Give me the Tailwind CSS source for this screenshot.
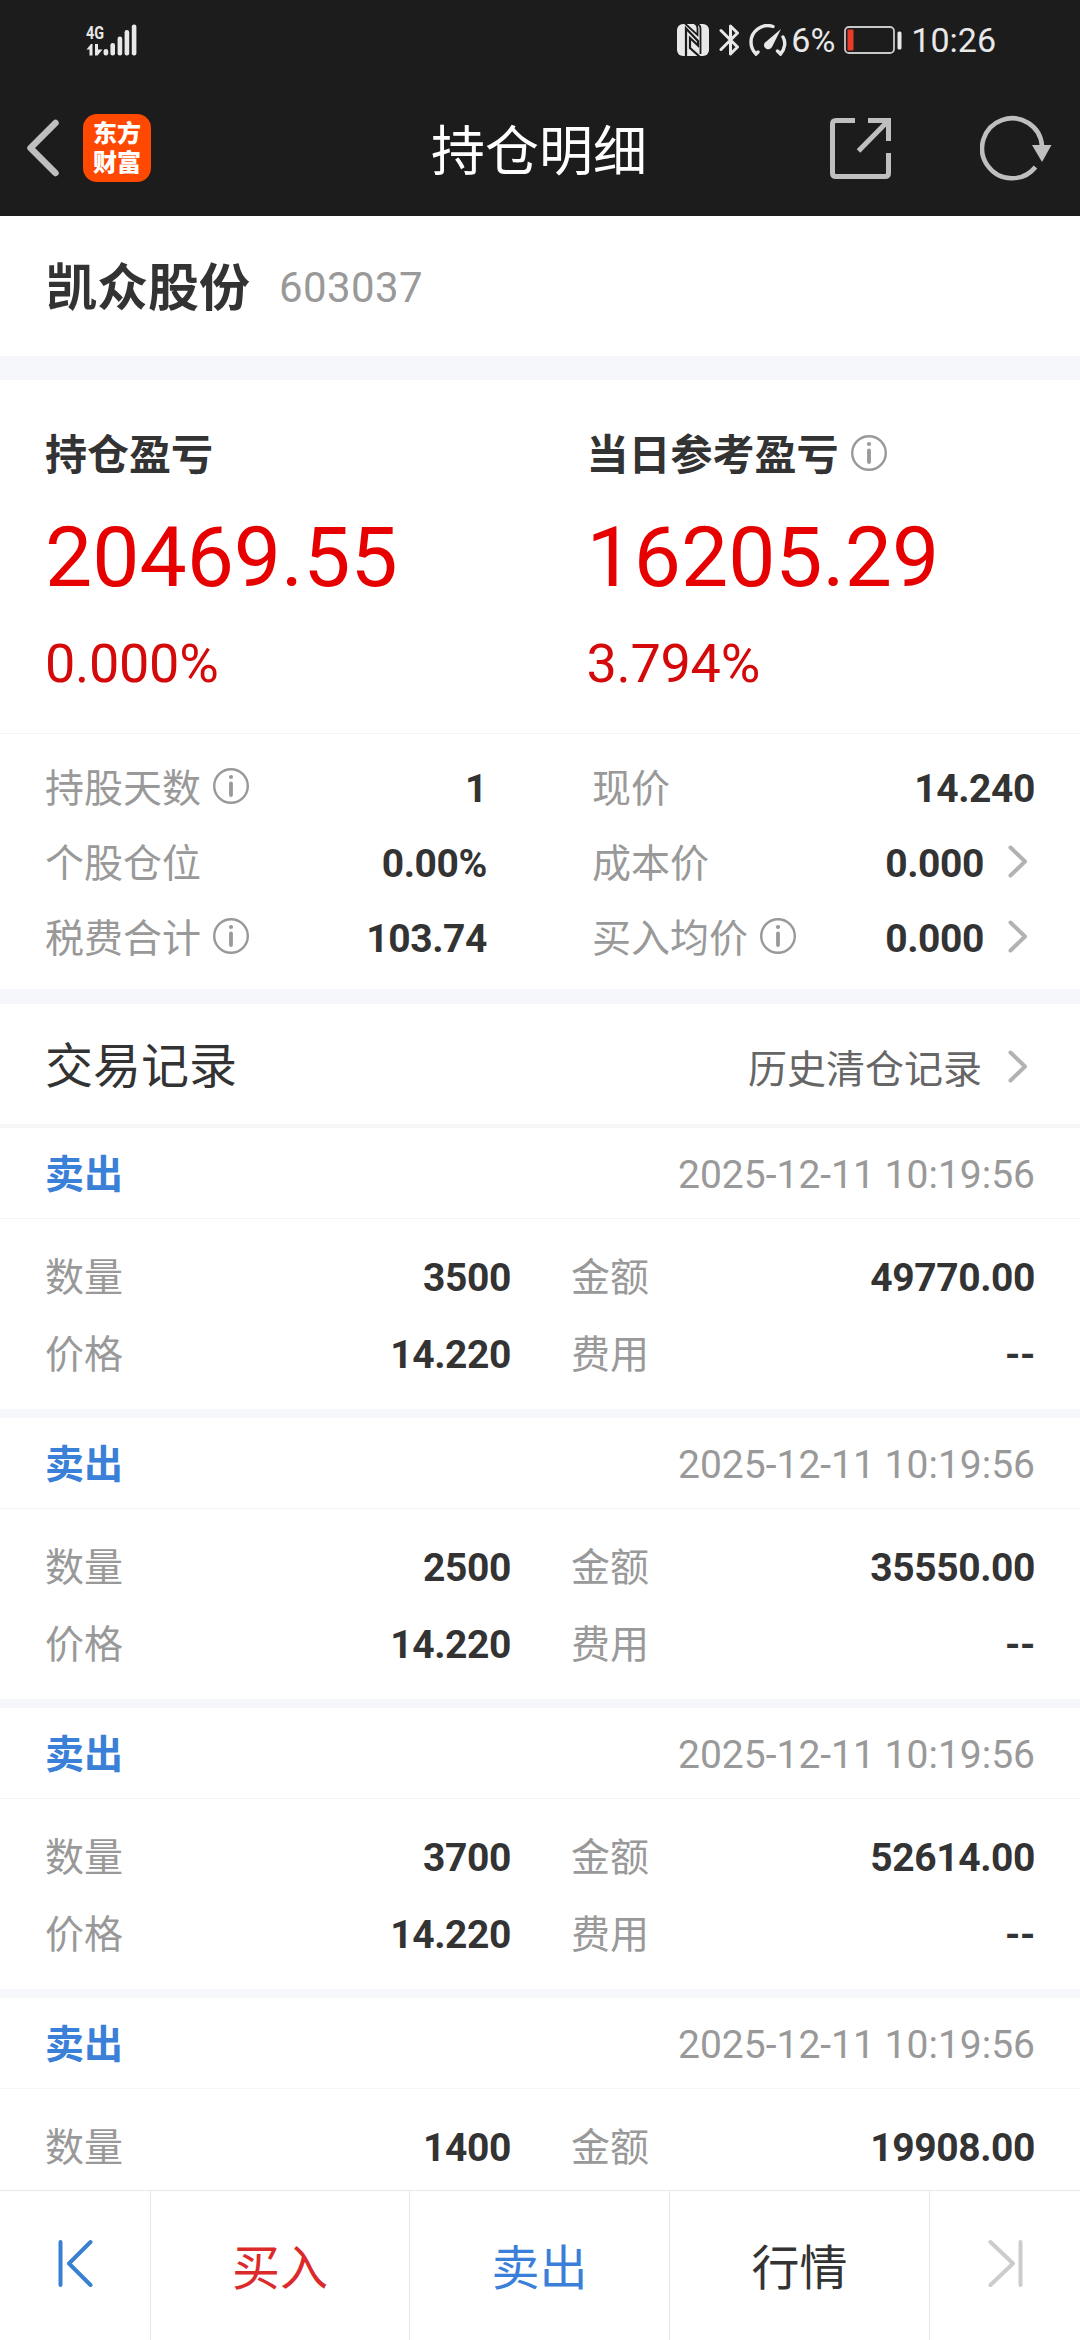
<!DOCTYPE html>
<html lang="zh-CN">
<head>
    <meta charset="UTF-8">
    <meta name="viewport" content="width=device-width, initial-scale=1.0">
    <title>持仓明细</title>

    <script src="https://cdn.jsdelivr.net/npm/@tailwindcss/browser@4"></script>
</head>

<body class="bg-white">

    <!-- shared icons -->
    <svg class="hidden">
        <symbol id="info" viewBox="0 0 36 36">
            <circle cx="18" cy="18" r="16.8" fill="none" stroke="#999" stroke-width="2.4"/>
            <circle cx="18" cy="9" r="2.1" fill="#999"/>
            <path d="M18 15.5V27" stroke="#999" stroke-width="3.8" stroke-linecap="round"/>
        </symbol>
        <symbol id="chevron" viewBox="0 0 20 33">
            <path d="M2.5 2.5L17 16.5L2.5 30.5" fill="none" stroke="#b2b2b2" stroke-width="4" stroke-linecap="round" stroke-linejoin="round"/>
        </symbol>
    </svg>

    <div class="w-[1080px] h-[2340px] flex flex-col overflow-hidden bg-white text-[#333] text-[39px] font-[Roboto,'Noto_Sans_CJK_SC',sans-serif]">

        <!-- top bar -->
        <header class="h-[216px] shrink-0 bg-[#1c1c1c]">
            <div class="h-20 flex items-center justify-between pl-[86px] pr-[84px]">
                <svg class="w-[52px] h-[46px]" viewBox="0 -6 52 46" fill="#e8e8e8">
                    <text x="0" y="15.5" font-size="19" font-weight="700" textLength="18" lengthAdjust="spacingAndGlyphs">4G</text>
                    <path d="M0.500 26.500L5 21H6.500V32.500H3.500V26.500Z"/>
                    <path d="M9 21H12V26.500H16.500L11.500 32.500H9Z"/>
                    <rect x="17.6" y="26" width="4.6" height="6.5" rx="2.2"/>
                    <rect x="24.4" y="20" width="4.6" height="12.5" rx="2.2"/>
                    <rect x="31.6" y="13.5" width="4.6" height="19" rx="2.2"/>
                    <rect x="38.6" y="7" width="4.6" height="25.5" rx="2.2"/>
                    <rect x="45.8" y="1.5" width="4.6" height="31" rx="2.2"/>
                </svg>
                <div class="flex items-center text-[34px] leading-10 text-[#e8e8e8]">
                    <!-- nfc -->
                    <svg class="w-8 h-8 mr-[10px]" viewBox="0 0 32 32">
                        <rect width="32" height="32" rx="6" fill="#e8e8e8"/>
                        <path d="M9 32V4.500L21 17V21.500L13 14V24L22.500 32.500" fill="none" stroke="#1c1c1c" stroke-width="2.200"/>
                        <path d="M8 -0.500L20.500 11V4Q20.500 1 17.500 -0.500M20 0Q23.500 1 23.500 4V30" fill="none" stroke="#1c1c1c" stroke-width="1.800"/>
                    </svg>
                    <!-- bluetooth -->
                    <svg class="w-[21px] h-8 mr-[9px]" viewBox="0 0 21 32" fill="none" stroke="#e8e8e8" stroke-width="3" stroke-linecap="round" stroke-linejoin="round">
                        <path d="M2 6.500L18.500 23L11.500 30V2L18.500 9L2 25.500"/>
                    </svg>
                    <!-- performance gauge -->
                    <svg class="w-[38px] h-8 mr-[4px]" viewBox="0 0 38 32" fill="none" stroke="#e8e8e8" stroke-width="3.400" stroke-linecap="round">
                        <path d="M24 2.500C13 -1 2 7 2 18C2 23 4 27 7 30L9 28"/>
                        <path d="M34 13C37 18 36 25 31.500 30L28.500 27"/>
                        <path d="M32 5L23 23A4 4 0 0 1 15.500 19Z" fill="#e8e8e8" stroke="none"/>
                    </svg>
                    <span>6%</span>
                    <svg class="w-[58px] h-7 ml-[9px] mr-[9px]" viewBox="0 0 58 28">
                        <rect x="1" y="1" width="49" height="26" rx="4" fill="none" stroke="#c8c8c8" stroke-width="1.8"/>
                        <rect x="3.500" y="3.500" width="6" height="21" rx="1" fill="#e83b28"/>
                        <rect x="53.500" y="5.500" width="4" height="18" rx="1.500" fill="#e8e8e8"/>
                    </svg>
                    <span>10:26</span>
                </div>
            </div>
            <div class="h-[136px] grid grid-cols-[1fr_auto_1fr] items-center pl-[26px] pr-[28px]">
                <div class="flex items-center gap-[24px]">
                    <svg class="w-[33px] h-[58px]" viewBox="0 0 33 58">
                        <path d="M29.500 4L4.500 29L29.500 54" fill="none" stroke="#bfbfbf" stroke-width="6.500" stroke-linecap="round" stroke-linejoin="round"/>
                    </svg>
                    <div class="w-[68px] h-[68px] rounded-[14px] bg-[#ff4800] text-white text-[24px] leading-[29px] font-black text-center pt-[6px]">东方<br>财富</div>
                </div>
                <h1 class="text-[54px] leading-[80px] text-white pt-[10px]">持仓明细</h1>
                <div class="flex items-center justify-end gap-[89px]">
                    <svg class="w-[61px] h-[61px]" viewBox="0 0 61 61" fill="none" stroke="#bfbfbf" stroke-width="5">
                        <path d="M25 2.500H6Q2.500 2.500 2.500 6V55Q2.500 58.500 6 58.500H55Q58.500 58.500 58.500 55V35"/>
                        <path d="M38 2.500H58.500V23M58 3L28.500 33"/>
                    </svg>
                    <svg class="w-[72px] h-[66px]" viewBox="0 0 72 66">
                        <path d="M55.500 52A30 30 0 1 1 62 31" fill="none" stroke="#bfbfbf" stroke-width="4.600"/>
                        <path d="M52 30H71.500L62 47Z" fill="#bfbfbf"/>
                    </svg>
                </div>
            </div>
        </header>

        <!-- stock name -->
        <section class="h-[140px] shrink-0 flex items-center pl-[46px] gap-[29px] leading-[60px]">
            <h2 class="text-[51px] font-bold pt-[6px]">凯众股份</h2>
            <span class="text-[42px] tracking-[0.4px] text-[#999] pt-[3px]">603037</span>
        </section>
        <div class="h-6 shrink-0 bg-[#f6f7fa]"></div>

        <!-- profit and loss -->
        <section class="h-[354px] shrink-0 border-b border-[#f5f5f5] grid grid-cols-2 pl-[45px] pt-[46px] gap-x-[46px]">
            <div class="w-[494px]">
                <h3 class="text-[42px] leading-[60px] font-bold">持仓盈亏</h3>
                <div class="mt-[22px] text-[84px] leading-[100px] text-[#e60000]">20469.55</div>
                <div class="mt-[26px] text-[54px] leading-[60px] tracking-[-0.3px] text-[#d40a0a]">0.000%</div>
            </div>
            <div class="pl-px">
                <h3 class="text-[42px] leading-[60px] font-bold flex items-center gap-[12px]">当日参考盈亏<svg class="w-9 h-9 mb-[6px]"><use href="#info"/></svg></h3>
                <div class="mt-[22px] text-[84px] leading-[100px] text-[#e60000]">16205.29</div>
                <div class="mt-[26px] text-[54px] leading-[60px] tracking-[-0.3px] text-[#d40a0a]">3.794%</div>
            </div>
        </section>

        <!-- position figures -->
        <section class="h-[255px] shrink-0 flex pt-[18px] pl-[45px] pr-[45px] leading-[75px]">
            <div class="w-[442px] mr-[105px]">
                <div class="flex justify-between">
                    <span class="flex items-center gap-[12px] text-[#999]">持股天数<svg class="w-9 h-9 mb-[7px]"><use href="#info"/></svg></span>
                    <b class="tracking-[-0.4px]">1</b>
                </div>
                <div class="flex justify-between">
                    <span class="text-[#999]">个股仓位</span>
                    <b class="tracking-[-0.4px]">0.00%</b>
                </div>
                <div class="flex justify-between">
                    <span class="flex items-center gap-[12px] text-[#999]">税费合计<svg class="w-9 h-9 mb-[7px]"><use href="#info"/></svg></span>
                    <b class="tracking-[-0.4px]">103.74</b>
                </div>
            </div>
            <div class="flex-1">
                <div class="flex justify-between">
                    <span class="text-[#999]">现价</span>
                    <b class="tracking-[-0.4px]">14.240</b>
                </div>
                <div class="flex justify-between">
                    <span class="text-[#999]">成本价</span>
                    <span class="flex items-center"><b class="tracking-[-0.4px]">0.000</b><svg class="w-5 h-[33px] ml-[24px] mr-[7px] mb-[6px]"><use href="#chevron"/></svg></span>
                </div>
                <div class="flex justify-between">
                    <span class="flex items-center gap-[12px] text-[#999]">买入均价<svg class="w-9 h-9 mb-[7px]"><use href="#info"/></svg></span>
                    <span class="flex items-center"><b class="tracking-[-0.4px]">0.000</b><svg class="w-5 h-[33px] ml-[24px] mr-[7px] mb-[6px]"><use href="#chevron"/></svg></span>
                </div>
            </div>
        </section>
        <div class="h-[15px] shrink-0 bg-[#f6f7fa]"></div>

        <!-- trade records -->
        <section class="h-[124px] shrink-0 border-b-4 border-[#f6f6f6] flex items-center justify-between pl-[45px] pr-[52px]">
            <h2 class="text-[48px] leading-[60px] pt-[5px]">交易记录</h2>
            <a class="flex items-center text-[#666] leading-[60px]"><span class="pt-[12px]">历史清仓记录</span><svg class="w-5 h-[33px] ml-[26px] mt-[4px]"><use href="#chevron"/></svg></a>
        </section>
        <main id="recordList" class="flex-1 min-h-0 overflow-hidden"></main>

        <!-- bottom bar -->
        <nav class="h-[150px] shrink-0 border-t border-[#e8e8e8] bg-white grid grid-cols-[151px_259px_260px_260px_150px] text-[48px] leading-[60px] text-center">
            <div class="border-r border-[#e8e8e8] pt-[47px] pl-[57px] text-left">
                <svg class="w-9 h-[52px]" viewBox="0 0 36 52" fill="none" stroke="#3a80d2" stroke-width="4" stroke-linecap="round" stroke-linejoin="round">
                    <path d="M3.500 4V47M33.500 4L12 25.500L33.500 47"/>
                </svg>
            </div>
            <div class="border-r border-[#e8e8e8] pt-[48px] text-[#dc2a2a]">买入</div>
            <div class="border-r border-[#e8e8e8] pt-[48px] text-[#3a80d8]">卖出</div>
            <div class="border-r border-[#e8e8e8] pt-[48px]">行情</div>
            <div class="pt-[47px] pl-[58px] text-left">
                <svg class="w-9 h-[52px]" viewBox="0 0 36 52" fill="none" stroke="#ccc" stroke-width="4" stroke-linecap="round" stroke-linejoin="round">
                    <path d="M32.500 4V47M2.500 4L25 25.500L2.500 47"/>
                </svg>
            </div>
        </nav>
    </div>

    <script>
        const records = [
            { time: "2025-12-11 10:19:56", count: "3500", amount: "49770.00", price: "14.220", fee: "--" },
            { time: "2025-12-11 10:19:56", count: "2500", amount: "35550.00", price: "14.220", fee: "--" },
            { time: "2025-12-11 10:19:56", count: "3700", amount: "52614.00", price: "14.220", fee: "--" },
            { time: "2025-12-11 10:19:56", count: "1400", amount: "19908.00" },
        ];

        const list = document.getElementById("recordList");

        function cell(label, value) {
            return `<div class="flex justify-between"><span class="text-[#999]">${label}</span><b class="tracking-[-0.4px]">${value}</b></div>`;
        }

        records.forEach((record) => {
            const item = document.createElement("div");
            item.className = "h-[290px] border-b-9 border-[#f6f7fa]";

            let cells = cell("数量", record.count) + cell("金额", record.amount);
            if (record.price) {
                cells += cell("价格", record.price) + cell("费用", record.fee);
            }

            item.innerHTML = `
                <div class="h-[91px] border-b border-[#f5f5f5] flex items-center justify-between pl-[45px] pr-[45px] pt-[5px]">
                    <b class="text-[#3a80d8]">卖出</b>
                    <span class="text-[#999]">${record.time}</span>
                </div>
                <div class="grid grid-cols-[466px_464px] gap-x-[60px] pl-[45px] pt-[21px] leading-[77px]">${cells}</div>`;

            list.appendChild(item);
        });
    </script>
</body>
</html>
